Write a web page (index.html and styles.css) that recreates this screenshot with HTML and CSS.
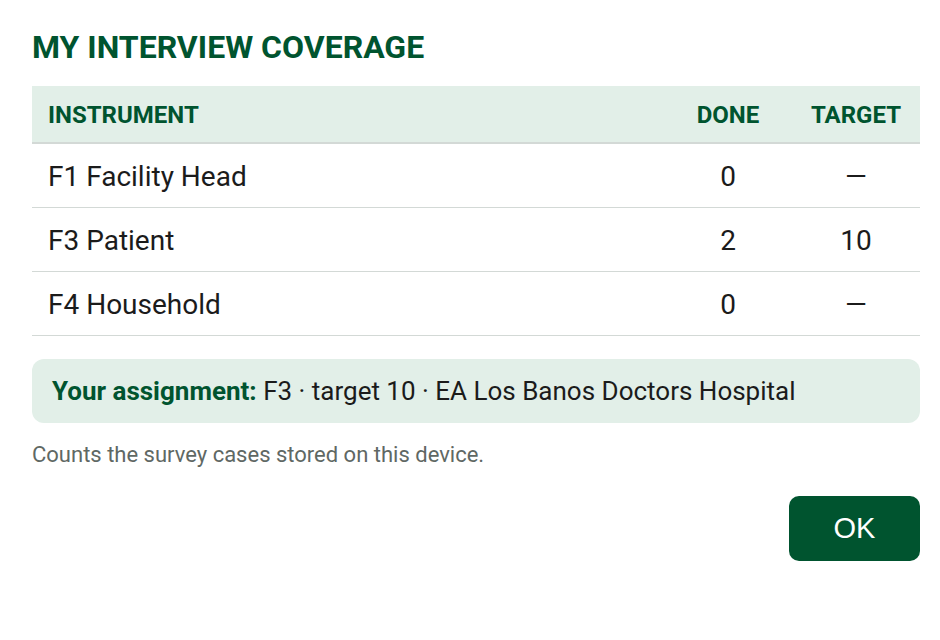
FILE: index.html
```html
<!DOCTYPE html>
<html>
<head>
<meta charset="utf-8">
<link rel="stylesheet" href="styles.css">
</head>
<body>
<div class="dialog">
  <h1 class="title">MY INTERVIEW COVERAGE</h1>
  <table class="cov">
    <thead>
      <tr><th class="c-name">INSTRUMENT</th><th class="c-num">DONE</th><th class="c-num">TARGET</th></tr>
    </thead>
    <tbody>
      <tr><td class="c-name">F1 Facility Head</td><td class="c-num">0</td><td class="c-num">—</td></tr>
      <tr><td class="c-name">F3 Patient</td><td class="c-num">2</td><td class="c-num">10</td></tr>
      <tr><td class="c-name">F4 Household</td><td class="c-num">0</td><td class="c-num">—</td></tr>
    </tbody>
  </table>
  <div class="assign"><strong>Your assignment:</strong> F3 · target 10 · EA Los Banos Doctors Hospital</div>
  <p class="note">Counts the survey cases stored on this device.</p>
  <div class="actions"><button class="ok">OK</button></div>
</div>
</body>
</html>
```
FILE: styles.css
```css
html, body { margin: 0; padding: 0; background: #fff; }
body { font-family: Roboto, "Noto Sans", sans-serif; color: #1b1b1b; }
.dialog { padding: 28px 20px 0 32px; }
.title { margin: 0 0 20px; font-size: 32px; font-weight: 700; color: #00542f; line-height: 38px; }
.cov { width: 100%; border-collapse: collapse; }
.cov th { background: #e2efe8; color: #00542f; font-size: 24px; font-weight: 700; height: 54px; padding: 2px 16px 0; border-bottom: 2px solid #d3d9d6; }
.cov td { font-size: 28px; height: 61px; padding: 2px 16px 0; border-bottom: 1.5px solid #d3d9d6; }
.c-name { text-align: left; }
.c-num { text-align: center; width: 96px; }
.assign { margin-top: 23px; background: #e2efe8; border-radius: 12px; padding: 0 20px; height: 64px; display: flex; align-items: center; font-size: 26px; white-space: pre; }
.assign strong { color: #00542f; font-weight: 700; }
.note { margin: 19px 0 0; font-size: 22px; line-height: 26px; color: #5f6864; }
.actions { display: flex; justify-content: flex-end; margin-top: 28px; }
.ok { width: 131px; height: 65px; border: 0; border-radius: 10px; background: #00542f; color: #fff; font-family: "Liberation Sans", Arial, sans-serif; font-size: 29px; }
```
